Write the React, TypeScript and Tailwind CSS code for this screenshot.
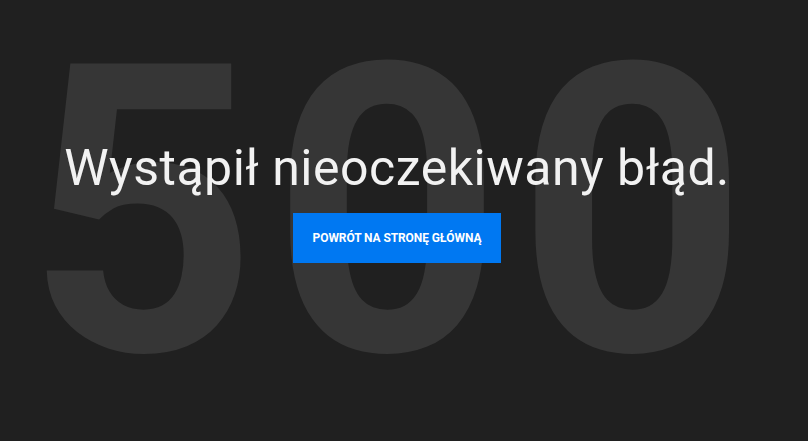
export default function App() {
  return (
    <div className="h-[441px] w-full overflow-hidden bg-[#202020] font-['Roboto',sans-serif]">
      <div className="relative h-full w-[794px]">
        <div className="absolute inset-x-0 top-[11px] flex justify-center">
          <span className="ml-[-6px] select-none text-[403px] font-bold leading-none tracking-[14px] text-[#363636]">
            500
          </span>
        </div>
        <div className="relative flex flex-col items-center pt-[138px]">
          <h1 className="whitespace-nowrap text-[50px] font-normal leading-[60px] tracking-[0.5px] text-[#f2f2f2]">
            Wystąpił nieoczekiwany błąd.
          </h1>
          <a
            href="#"
            className="mt-[15px] flex h-[50px] w-[208px] items-center justify-center bg-[#0078f2] text-[12px] font-bold uppercase tracking-[-0.1px] text-white"
          >
            Powrót na stronę główną
          </a>
        </div>
      </div>
    </div>
  );
}
